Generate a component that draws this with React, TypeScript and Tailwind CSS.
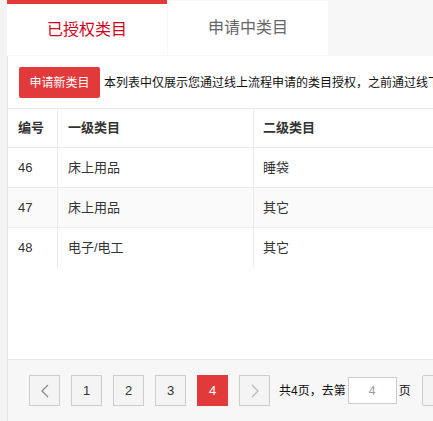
const FONT = "font-['Liberation_Sans','Noto_Sans_CJK_SC',sans-serif]";

const rows = [
  { id: 46, first: "床上用品", second: "睡袋" },
  { id: 47, first: "床上用品", second: "其它" },
  { id: 48, first: "电子/电工", second: "其它" },
];

function Chevron({ dir, color }: { dir: "left" | "right"; color: string }) {
  return (
    <svg width="8" height="14" viewBox="0 0 8 14" fill="none">
      <path
        d={dir === "left" ? "M7 1 L1 7 L7 13" : "M1 1 L7 7 L1 13"}
        stroke={color}
        strokeWidth="1.2"
      />
    </svg>
  );
}

function PageBox({ children, active }: { children: React.ReactNode; active?: boolean }) {
  return (
    <div
      className={`flex h-[31px] w-[31px] shrink-0 items-center justify-center text-[13px] ${
        active
          ? "bg-[#e23a3a] text-white"
          : "border border-[#cccccc] bg-[#f4f4f4] text-[#333]"
      }`}
    >
      {children}
    </div>
  );
}

export default function App() {
  return (
    <div className={`flex h-[421px] w-[433px] overflow-hidden bg-[#f7f7f7] ${FONT}`}>
      <div className="w-[7px] shrink-0 bg-[#f3f3f3]" />
      <div className="flex min-w-0 flex-1 flex-col">
        {/* tabs */}
        <div className="flex h-[55px] shrink-0">
          <div className="flex w-[160px] shrink-0 items-center justify-center border-t-4 border-[#e23a3a] bg-white text-[16px] text-[#d0021b]">
            已授权类目
          </div>
          <div className="ml-px mt-px flex w-[160px] shrink-0 items-center justify-center bg-white text-[16px] text-[#666]">
            申请中类目
          </div>
        </div>

        <div className="mt-px flex flex-1 flex-col border-l border-[#e6e6e6] bg-white">
          <div className="flex flex-1 flex-col pt-[11px]">
            <div className="flex items-center whitespace-nowrap pl-[11px]">
              <div className="flex h-[31px] w-[81px] shrink-0 items-center justify-center rounded-[2px] bg-[#e23a3a] text-[12px] text-white">
                申请新类目
              </div>
              <span className="ml-[4px] text-[12px] text-[#111]">
                本列表中仅展示您通过线上流程申请的类目授权，之前通过线下流程申请的类目请联系客服查询
              </span>
            </div>

            <div className="mt-[10px] border-t border-[#ebebeb] text-[13px] text-[#333]">
              <div className="grid h-[39px] grid-cols-[50px_196px_1fr] border-b border-[#ebebeb] font-bold">
                <div className="flex items-center border-r border-[#ebebeb] pl-[10px]">编号</div>
                <div className="flex items-center border-r border-[#ebebeb] pl-[10px]">一级类目</div>
                <div className="flex items-center pl-[9px]">二级类目</div>
              </div>
              {rows.map((r, i) => (
                <div
                  key={r.id}
                  className={`grid h-[40px] grid-cols-[50px_196px_1fr] ${
                    i < rows.length - 1 ? "border-b border-[#ebebeb]" : ""
                  } ${i === 1 ? "bg-[#fafafa]" : ""}`}
                >
                  <div className="flex items-center border-r border-[#ebebeb] pl-[10px]">{r.id}</div>
                  <div className="flex items-center border-r border-[#ebebeb] pl-[10px]">{r.first}</div>
                  <div className="flex items-center pl-[9px]">{r.second}</div>
                </div>
              ))}
            </div>
          </div>

          {/* pagination */}
          <div className="flex h-[62px] shrink-0 items-start gap-[11px] whitespace-nowrap border-t border-[#e8e8e8] bg-[#f7f7f7] pl-[21px] pt-[15px]">
            <PageBox>
              <Chevron dir="left" color="#8a8a8a" />
            </PageBox>
            <PageBox>1</PageBox>
            <PageBox>2</PageBox>
            <PageBox>3</PageBox>
            <PageBox active>4</PageBox>
            <PageBox>
              <Chevron dir="right" color="#b8b8b8" />
            </PageBox>
            <div className="-ml-[2px] flex h-[31px] items-center text-[12px] text-[#111]">
              <span>共4页，去第</span>
              <div className="ml-[2px] flex h-[27px] w-[49px] items-center justify-center border border-[#cccccc] bg-white text-[12px] text-[#999]">
                4
              </div>
              <span className="ml-[2px]">页</span>
              <div className="ml-[11px] h-[31px] w-[40px] shrink-0 rounded-[2px] border border-[#cccccc] bg-[#f4f4f4]" />
            </div>
          </div>
        </div>
      </div>
    </div>
  );
}
